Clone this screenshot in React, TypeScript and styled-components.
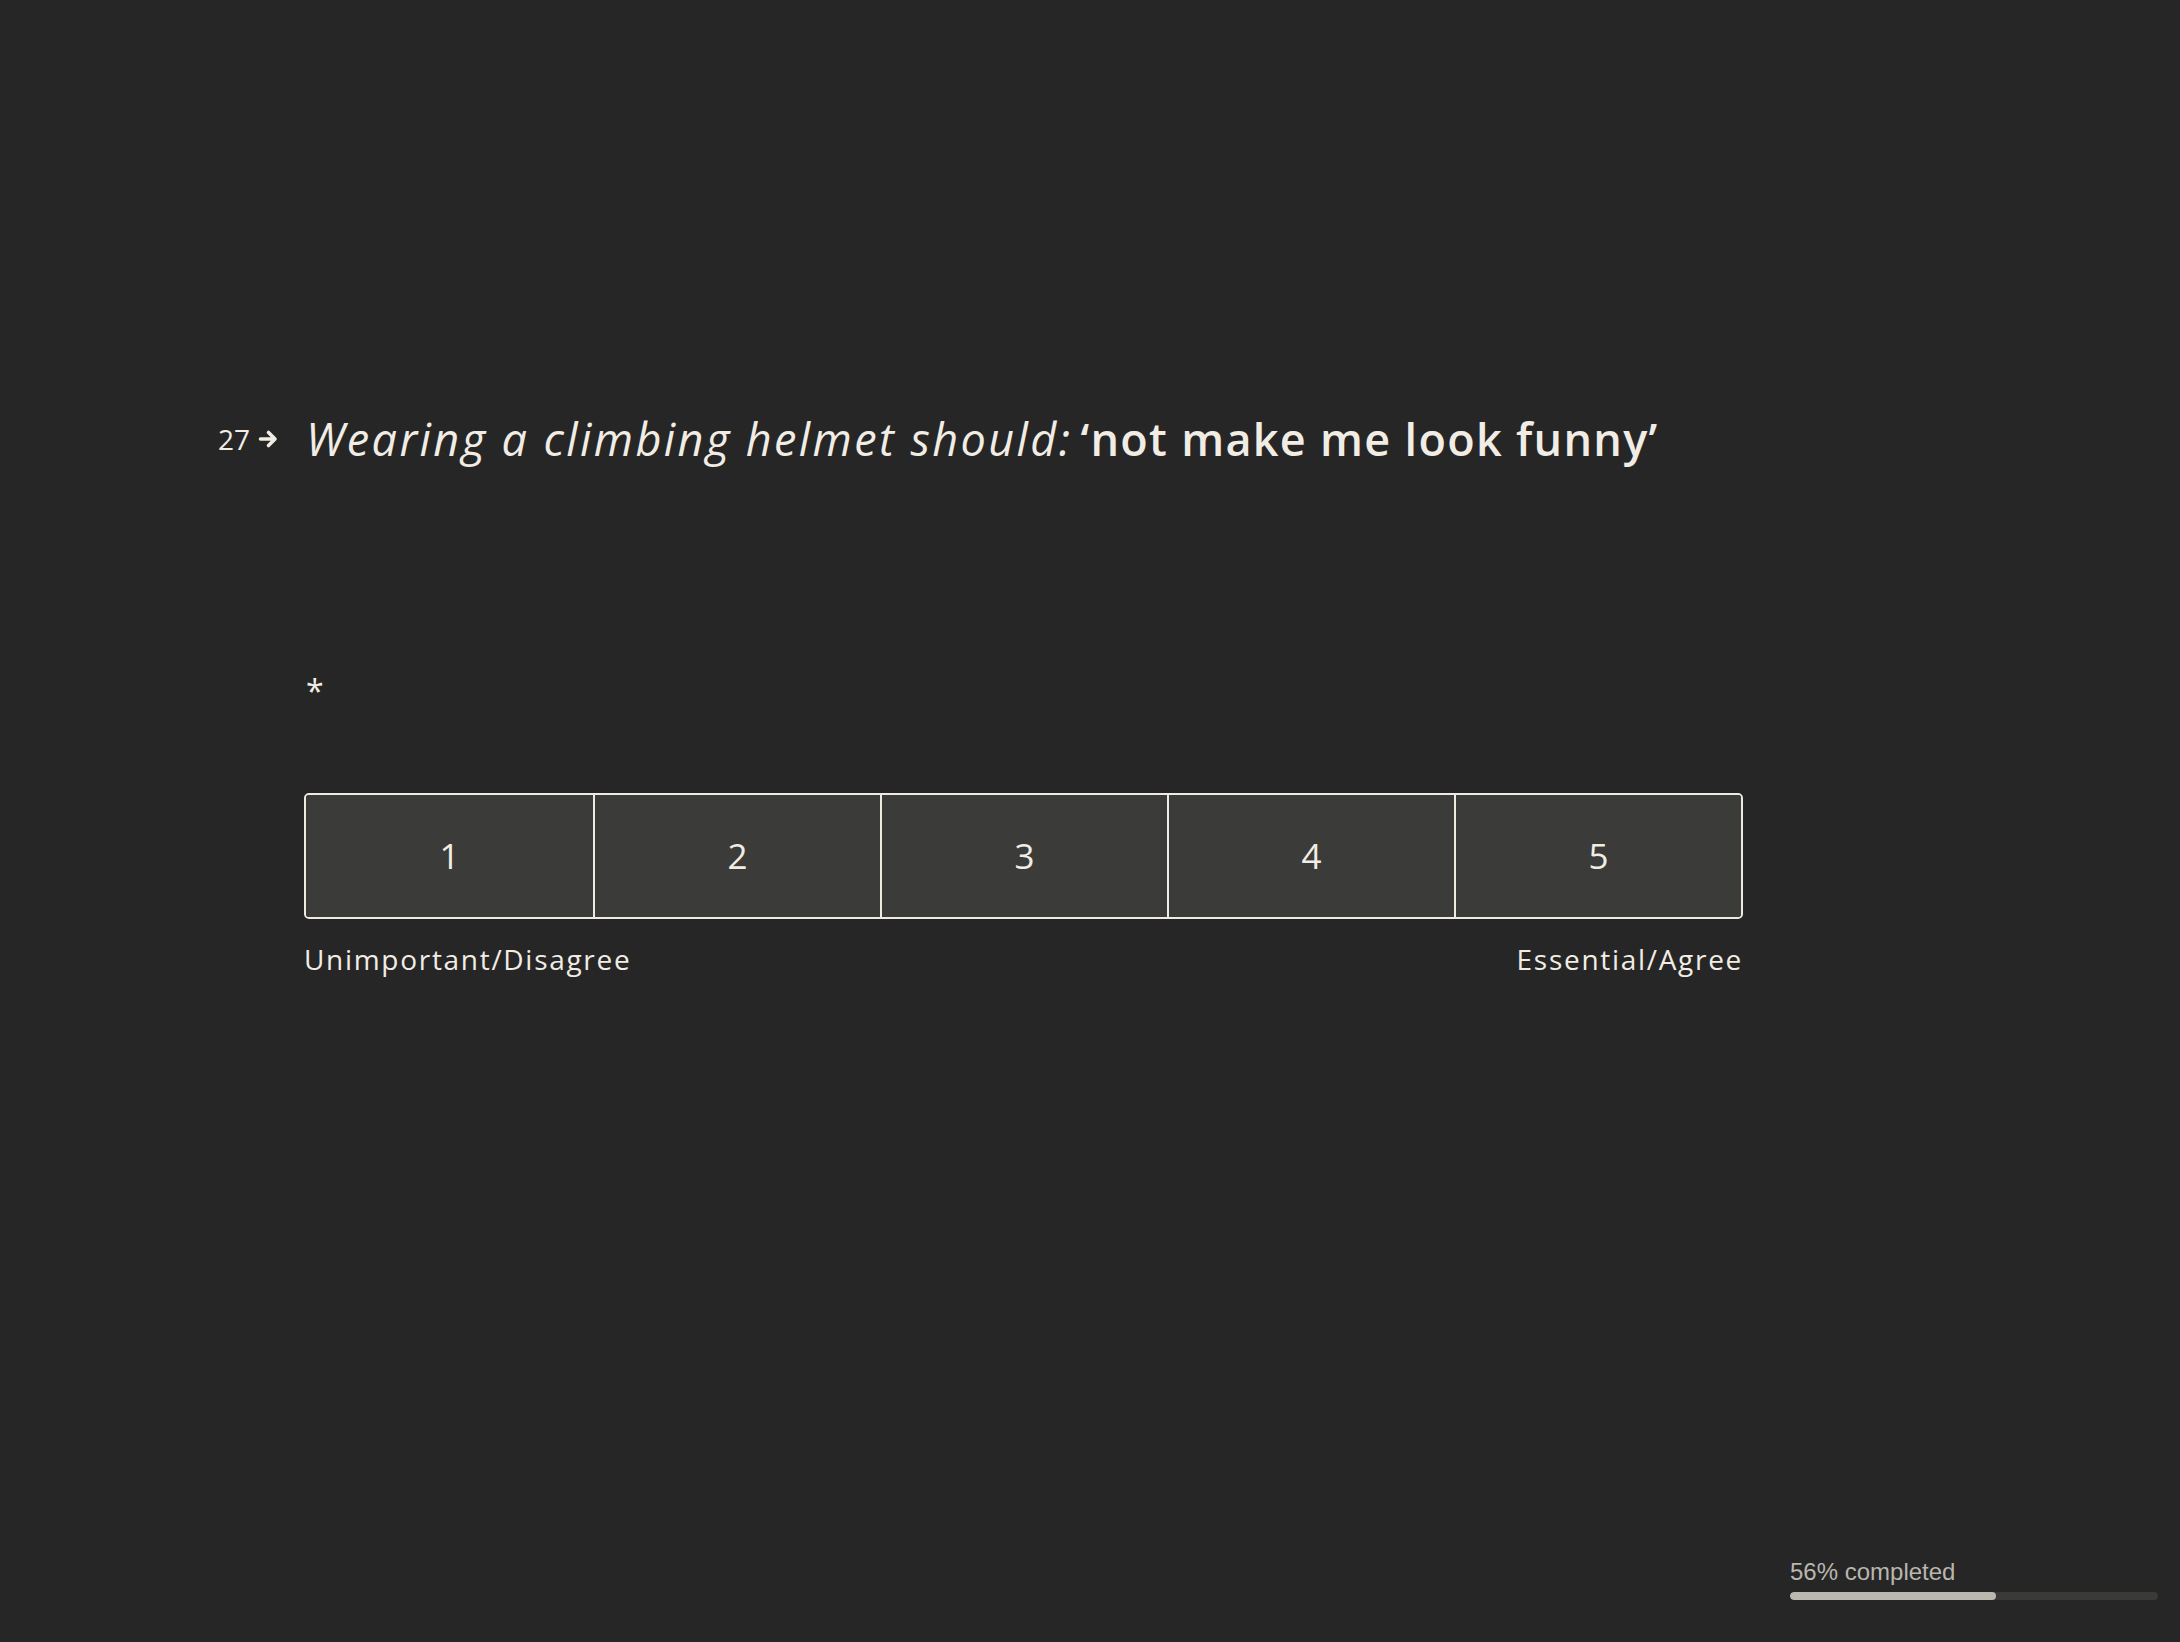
import React from 'react';
import styled, { createGlobalStyle } from 'styled-components';

const GlobalStyle = createGlobalStyle`
  html, body {
    margin: 0;
    padding: 0;
    background: #262626;
  }
  body {
    font-family: "Open Sans", "Noto Sans", sans-serif;
    color: #f1ede5;
  }
`;

const Page = styled.div`
  min-height: 100vh;
  box-sizing: border-box;
  display: flex;
  flex-direction: column;
  background: #262626;
`;

const Main = styled.main`
  padding: 410px 0 0 218px;
  width: 1525px;
`;

const QuestionRow = styled.div`
  display: flex;
  align-items: center;
  height: 58px;
`;

const Counter = styled.div`
  width: 88px;
  flex: none;
  display: flex;
  align-items: center;
  gap: 8px;
  font-size: 28px;
  line-height: 1;
  color: #f1ede5;
`;

const Question = styled.h1`
  margin: 0;
  font-size: 45px;
  line-height: 58px;
  font-weight: 400;
  white-space: nowrap;

  em {
    font-style: italic;
    letter-spacing: 2.4px;
  }

  strong {
    font-weight: 600;
    letter-spacing: 1.3px;
    margin-left: 8px;
  }
`;

const Body = styled.div`
  padding-left: 86px;
`;

const Required = styled.div`
  margin-top: 207px;
  padding-left: 2px;
  font-size: 32px;
  line-height: 32px;
  height: 32px;
`;

const Scale = styled.div`
  margin-top: 86px;
  display: grid;
  grid-template-columns: repeat(5, 1fr);
  width: 1439px;
  height: 126px;
  box-sizing: border-box;
  border: 2px solid #efebe3;
  border-radius: 5px;
  overflow: hidden;
`;

const Option = styled.button<{ $first?: boolean }>`
  appearance: none;
  margin: 0;
  padding: 0 0 2px;
  border: none;
  border-left: ${(p) => (p.$first ? 'none' : '2px solid #efebe3')};
  background: #3b3b39;
  color: #f1ede5;
  font-family: "Open Sans", "Noto Sans", sans-serif;
  font-size: 35px;
  font-weight: 400;
  display: flex;
  align-items: center;
  justify-content: center;
  cursor: pointer;
`;

const Labels = styled.div`
  display: flex;
  justify-content: space-between;
  width: 1439px;
  margin-top: 22px;
  font-size: 28px;
  line-height: 36px;
  letter-spacing: 1.7px;
`;

const Footer = styled.footer`
  margin-top: auto;
  align-self: flex-end;
  padding: 0 22px 42px 0;
  width: 368px;
`;

const ProgressText = styled.div`
  font-family: "Liberation Sans", Arial, sans-serif;
  font-size: 24px;
  line-height: 28px;
  color: #b9b6ae;
  margin-bottom: 6px;
`;

const Track = styled.div`
  height: 8px;
  border-radius: 4px;
  background: #3a3a38;
  overflow: hidden;
`;

const Fill = styled.div`
  height: 100%;
  border-radius: 4px;
  background: #bbb8b0;
`;

const Arrow = () => (
  <svg width="21" height="20" viewBox="0 0 20 20" fill="none">
    <path d="M2 10h14M10 3.5l6.5 6.5L10 16.5" stroke="#f1ede5" strokeWidth="3.6" strokeLinecap="round" strokeLinejoin="round" />
  </svg>
);

const App: React.FC = () => {
  const progress = 56;
  return (
    <Page>
      <GlobalStyle />
      <Main>
        <QuestionRow>
          <Counter>
            <span>27</span>
            <Arrow />
          </Counter>
          <Question>
            <em>Wearing a climbing helmet should:</em>
            <strong>‘not make me look funny’</strong>
          </Question>
        </QuestionRow>
        <Body>
          <Required>*</Required>
          <Scale>
            {[1, 2, 3, 4, 5].map((n) => (
              <Option key={n} $first={n === 1}>{n}</Option>
            ))}
          </Scale>
          <Labels>
            <span>Unimportant/Disagree</span>
            <span>Essential/Agree</span>
          </Labels>
        </Body>
      </Main>
      <Footer>
        <ProgressText>{progress}% completed</ProgressText>
        <Track>
          <Fill style={{ width: `${progress}%` }} />
        </Track>
      </Footer>
    </Page>
  );
};

export default App;
